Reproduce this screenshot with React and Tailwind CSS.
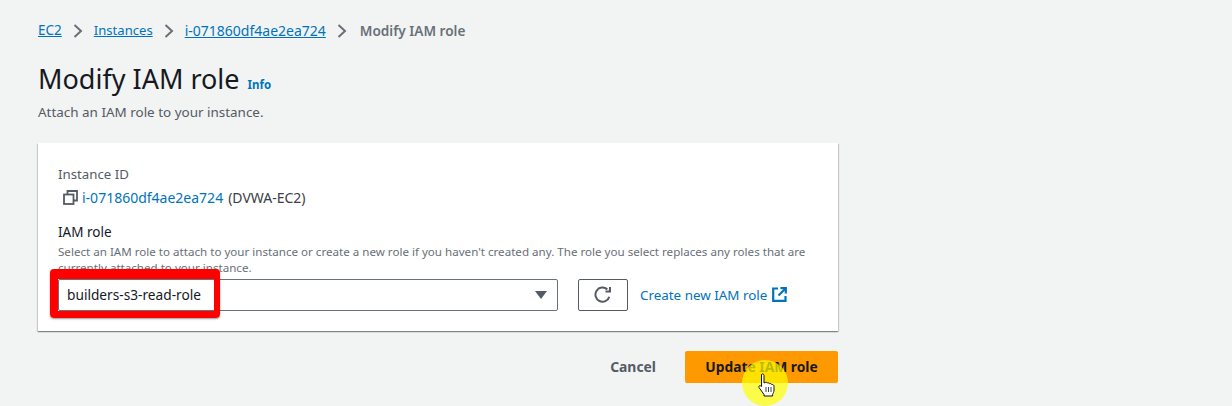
const font = { fontFamily: '"Noto Sans", "Open Sans", sans-serif' }

function Chevron() {
  return (
    <svg width="10" height="14" viewBox="0 0 10 14" fill="none" className="mx-[11px] shrink-0">
      <path d="M1.5 1 L8 7 L1.5 13" stroke="#687078" strokeWidth="2" />
    </svg>
  )
}

function CopyIcon() {
  return (
    <svg width="15" height="15" viewBox="0 0 15 15" fill="none" stroke="#545b64" strokeWidth="1.8">
      <rect x="1" y="4.5" width="9.5" height="9.5" />
      <path d="M4.5 4.5 V1 H14 V10.5 H10.5" />
    </svg>
  )
}

function RefreshIcon() {
  return (
    <svg width="18" height="18" viewBox="0 0 16 16" fill="none" stroke="#545b64" strokeWidth="1.8">
      <path d="M13.6 9.5 A6.3 6.3 0 1 1 11.8 3" />
      <path d="M14.2 0.8 V4.8 H10.2" />
    </svg>
  )
}

function ExternalIcon() {
  return (
    <svg width="15" height="15" viewBox="0 0 15 15" fill="none" stroke="#0073bb" strokeWidth="2.2">
      <path d="M6 1.5 H1.2 V13.8 H13.5 V9" />
      <path d="M8.5 1.2 H13.8 V6.5" />
      <path d="M13.5 1.5 L6.5 8.5" />
    </svg>
  )
}

function Cursor() {
  return (
    <svg width="18" height="24" viewBox="0 0 18 24" className="absolute left-[758px] top-[373px]">
      <path
        d="M3.5 1.5 C4.5 0.5 6 1 6 2.5 V10 L7 9.5 C8 9 9 9.5 9.2 10 C10.2 9.5 11.2 10 11.4 10.7 C12.5 10.2 13.6 10.8 13.8 11.6 C15 11.4 16 12 16 13.2 V17 C16 19 15.2 20 14.6 21.5 V23 H6 V21.5 C4.5 19.5 2.5 16.5 1 14.5 C0.3 13.2 1.8 11.8 3.5 13.5 Z"
        fill="#fff"
        stroke="#111"
        strokeWidth="1"
      />
      <path d="M8 14v5M10.5 14v5M13 14v5" stroke="#111" strokeWidth="0.8" />
    </svg>
  )
}

export default function App() {
  return (
    <div className="relative h-[406px] w-[1232px] overflow-hidden bg-[#f2f3f3] pl-[38px] pt-[21px] text-[#16191f]" style={font}>
      <nav className="flex h-[19px] items-center leading-[19px]">
        <a className="text-[13.5px] text-[#0073bb] underline">EC2</a>
        <Chevron />
        <a className="text-[13.1px] text-[#0073bb] underline">Instances</a>
        <Chevron />
        <a className="text-[14px] text-[#0073bb] underline">i-071860df4ae2ea724</a>
        <Chevron />
        <span className="ml-[2px] text-[13.6px] font-semibold text-[#687078]">Modify IAM role</span>
      </nav>

      <div className="mt-[21px] flex items-baseline gap-[8px]">
        <h1 className="text-[27px] leading-[36px]">Modify IAM role</h1>
        <a className="text-[11.5px] font-bold text-[#0073bb]">Info</a>
      </div>
      <p className="mt-[6px] text-[13.45px] leading-[19px] text-[#545b64]">Attach an IAM role to your instance.</p>

      <section className="mt-[21px] h-[188px] w-[800px] bg-white px-[20px] pt-[22px] shadow-[0_1px_1px_0_rgba(0,28,36,0.3),1px_1px_1px_0_rgba(0,28,36,0.15),-1px_1px_1px_0_rgba(0,28,36,0.15)]">
        <div className="text-[13.25px] leading-[19px] text-[#545b64]">Instance ID</div>
        <div className="mt-[4px] flex h-[19px] items-center pl-[5px] text-[14px] leading-[19px]">
          <CopyIcon />
          <a className="ml-[4px] text-[#0073bb]">i-071860df4ae2ea724</a>
          <span className="ml-[5px] text-[#3b4047]">(DVWA-EC2)</span>
        </div>

        <div className="mt-[16px] text-[13.5px] leading-[19px] text-[#16191f]">IAM role</div>
        <p className="mt-[2px] w-[760px] text-[11.6px] leading-[16px] text-[#687078]">
          Select an IAM role to attach to your instance or create a new role if you haven't created any. The role you select replaces any roles that are currently attached to your instance.
        </p>

        <div className="mt-[3px] flex items-center">
          <div className="relative flex h-[32px] w-[500px] items-center justify-between rounded-[2px] border border-[#687078] bg-white pl-[8px] pr-[10px] text-[13.7px]">
            <span>builders-s3-read-role</span>
            <span className="h-0 w-0 border-x-[6px] border-t-[8px] border-x-transparent border-t-[#545b64]" />
            <div className="absolute left-[-9px] top-[-11px] h-[49px] w-[170px] rounded-[4px] border-t-[10px] border-r-[6px] border-b-[7px] border-l-[8px] border-[#ff0000] shadow-[0_1px_2px_rgba(0,0,0,0.4)]" />
          </div>
          <button className="ml-[20px] flex h-[32px] w-[50px] items-center justify-center rounded-[2px] border border-[#545b64] bg-white">
            <RefreshIcon />
          </button>
          <a className="ml-[12px] flex items-center gap-[5px] text-[13.4px] text-[#0073bb]">
            Create new IAM role
            <ExternalIcon />
          </a>
        </div>
      </section>

      <div className="mt-[20px] flex w-[800px] items-center justify-end">
        <button className="mr-[29px] text-[13.9px] font-bold text-[#545b64]">Cancel</button>
        <button className="h-[32px] w-[153px] rounded-[2px] bg-[#ff9900] text-[13.8px] font-bold text-[#16191f]">Update IAM role</button>
      </div>

      <div className="absolute left-[742px] top-[360px] h-[46px] w-[46px] rounded-full bg-[#ffff00]/70" />
      <Cursor />
    </div>
  )
}
